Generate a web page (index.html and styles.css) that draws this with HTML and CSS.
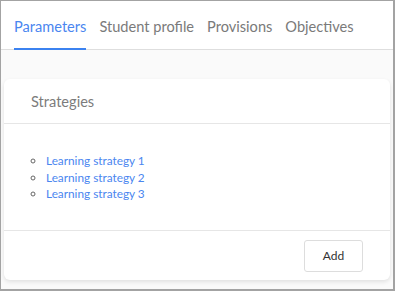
FILE: index.html
```html
<!DOCTYPE html>
<html lang="en">
<head>
    <meta charset="UTF-8">
    <meta name="viewport" content="width=device-width, initial-scale=1.0">
    <title>Parameters</title>
    <link rel="stylesheet" href="styles.css">
</head>
<body>
    <div class="frame">
        <nav class="tabs">
            <a class="tab active" href="#">Parameters</a>
            <a class="tab" href="#">Student profile</a>
            <a class="tab" href="#">Provisions</a>
            <a class="tab" href="#">Objectives</a>
        </nav>

        <div class="content">
            <div class="card">
                <div class="card-header">Strategies</div>
                <div class="card-body">
                    <ul class="strategy-list">
                        <li><a href="#">Learning strategy 1</a></li>
                        <li><a href="#">Learning strategy 2</a></li>
                        <li><a href="#">Learning strategy 3</a></li>
                    </ul>
                </div>
                <div class="card-footer">
                    <button class="add-btn">Add</button>
                </div>
            </div>
        </div>
    </div>
</body>
</html>
```

FILE: styles.css
```css
body {
    margin: 0;
    font-family: Lato, "Liberation Sans", sans-serif;
    background-color: #ffffff;
}

.frame {
    box-sizing: border-box;
    width: 395px;
    height: 291px;
    border-style: solid;
    border-color: #a3a3a3;
    border-width: 1px 2px 2px 1px;
    background-color: #fafafa;
    overflow: hidden;
}

.tabs {
    display: flex;
    gap: 13px;
    height: 48px;
    padding-left: 13px;
    background-color: #ffffff;
    border-bottom: 1px solid #dedede;
}

.tab {
    box-sizing: border-box;
    height: 49px;
    padding-top: 17px;
    font-size: 14.6px;
    line-height: 18px;
    color: #7a7a7a;
    text-decoration: none;
    border-bottom: 2px solid transparent;
}

.tab.active {
    color: #4a86f0;
    border-bottom-color: #3b82f0;
}

.content {
    padding: 29px 3px 0 3px;
}

.card {
    background-color: #ffffff;
    border-radius: 6px;
    box-shadow: 0 2px 4px rgba(0, 0, 0, 0.1);
}

.card-header {
    height: 44px;
    padding-left: 27px;
    font-size: 14.6px;
    line-height: 46px;
    color: #7c7c7c;
    border-bottom: 1px solid #e6e6e6;
}

.card-body {
    padding: 29px 30px 27px 30px;
}

.strategy-list {
    margin: 0;
    padding-left: 12px;
    list-style: circle;
    color: #666666;
}

.strategy-list li {
    font-size: 11.8px;
    line-height: 16.5px;
}

.strategy-list a {
    color: #4a86f0;
    text-decoration: none;
}

.card-footer {
    display: flex;
    justify-content: flex-end;
    padding: 9px 27px 8px 0;
    border-top: 1px solid #e6e6e6;
}

.add-btn {
    width: 59px;
    height: 32px;
    font-family: Lato, "Liberation Sans", sans-serif;
    font-size: 12px;
    color: #333333;
    background-color: #ffffff;
    border: 1px solid #dddddd;
    border-radius: 3px;
}
```
